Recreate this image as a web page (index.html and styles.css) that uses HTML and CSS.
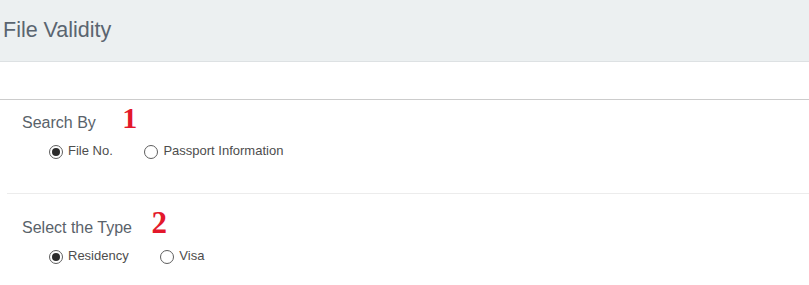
FILE: index.html
```html
<!DOCTYPE html>
<html lang="en">
<head>
  <meta charset="UTF-8">
  <meta name="viewport" content="width=device-width, initial-scale=1">
  <title>File Validity</title>
  <link rel="stylesheet" href="styles.css">
</head>
<body>
  <div class="page-header">
    <h1>File Validity</h1>
  </div>
  <div class="toolbar"></div>

  <form id="validityForm">
    <div class="section">
      <h3 class="section-title">Search By <span class="step-no step-one">1</span></h3>
      <div class="radio-row">
        <label class="radio"><input type="radio" name="searchBy" value="file" checked>File No.</label>
        <label class="radio"><input type="radio" name="searchBy" value="passport">Passport Information</label>
      </div>
    </div>

    <hr class="divider">

    <div class="section section-second">
      <h3 class="section-title">Select the Type <span class="step-no step-two">2</span></h3>
      <div class="radio-row">
        <label class="radio"><input type="radio" name="type" value="residency" checked>Residency</label>
        <label class="radio"><input type="radio" name="type" value="visa">Visa</label>
      </div>
    </div>
  </form>
</body>
</html>
```

FILE: styles.css
```css
body {
  margin: 0;
  font-family: "Liberation Sans", Arial, sans-serif;
  background: white;
  color: #555;
}
.page-header {
  height: 61px;
  background: #ecf0f1;
  border-bottom: 1px solid #dde1e3;
}
.page-header h1 {
  margin: 0;
  padding-left: 3px;
  font-size: 21.5px;
  font-weight: normal;
  line-height: 61px;
  color: #5a6570;
}
.toolbar {
  height: 37px;
  border-bottom: 1px solid #cccccc;
}
.section {
  padding: 13px 0 34px 22px;
}
.section-second {
  padding-top: 24px;
  padding-bottom: 20px;
}
.section-title {
  margin: 0 0 10px;
  font-size: 16px;
  font-weight: normal;
  line-height: 20px;
  color: #59626a;
}
.step-no {
  font-family: "Liberation Serif", "Times New Roman", serif;
  font-size: 30px;
  font-weight: bold;
  line-height: 0;
  color: #e3182b;
}
.step-one {
  margin-left: 22px;
}
.step-two {
  margin-left: 15px;
  font-size: 31px;
}
.radio-row {
  padding-left: 27px;
  font-size: 13px;
  line-height: 16px;
  color: #4d4d4d;
}
.radio {
  margin-right: 28px;
  cursor: pointer;
}
.radio input {
  appearance: none;
  -webkit-appearance: none;
  width: 14px;
  height: 14px;
  margin: 0 5px 0 0;
  border: 1px solid #5e5e5e;
  border-radius: 50%;
  background: white;
  vertical-align: -4px;
  display: inline-block;
  position: relative;
}
.radio input:checked::after {
  content: "";
  position: absolute;
  top: 2px;
  left: 2px;
  width: 8px;
  height: 8px;
  border-radius: 50%;
  background: #2b2b2b;
}
.divider {
  margin: 0 0 0 7px;
  border: none;
  border-top: 1px solid #ececec;
}
```
